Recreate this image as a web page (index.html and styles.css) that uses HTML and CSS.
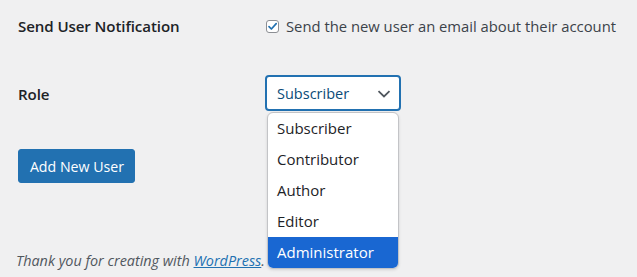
FILE: index.html
```html
<!DOCTYPE html>
<html lang="en">
<head>
<meta charset="utf-8">
<title>Add New User</title>
<link rel="stylesheet" href="styles.css">
</head>
<body>
<div class="page">
  <form class="form">
    <div class="row row-notify">
      <div class="label">Send User Notification</div>
      <label class="check">
        <span class="box"><svg width="11" height="11" viewBox="0 0 11 11"><path d="M2 5.6 L4.4 8 L9.2 2.6" fill="none" stroke="#2271b1" stroke-width="1.7" stroke-linecap="round" stroke-linejoin="round"/></svg></span>
        <span class="check-text">Send the new user an email about their account</span>
      </label>
    </div>
    <div class="row row-role">
      <div class="label label-role">Role</div>
      <div class="select-wrap">
        <div class="select">
          <span>Subscriber</span>
          <svg class="chev" width="14" height="8" viewBox="0 0 14 8"><path d="M1.5 1.2 L7 6.4 L12.5 1.2" fill="none" stroke="#50575e" stroke-width="1.8"/></svg>
        </div>
        <ul class="menu">
          <li class="opt">Subscriber</li>
          <li class="opt">Contributor</li>
          <li class="opt">Author</li>
          <li class="opt">Editor</li>
          <li class="opt opt-active">Administrator</li>
        </ul>
      </div>
    </div>
    <div class="actions">
      <button type="button" class="btn">Add New User</button>
    </div>
  </form>
  <p class="footer"><em>Thank you for creating with <a href="#">WordPress</a>.</em></p>
</div>
</body>
</html>
```
FILE: styles.css
```css
html, body {
  margin: 0;
  padding: 0;
  background: #f0f0f1;
}
body {
  font-family: "Open Sans", "Noto Sans", sans-serif;
  color: #1d2327;
  font-size: 14px;
}
.page {
  width: 637px;
  height: 277px;
  overflow: hidden;
  padding-left: 18px;
  box-sizing: border-box;
}
.form {
  margin: 0;
}
.row {
  display: grid;
  grid-template-columns: 247px auto;
  align-items: center;
}
.row-notify {
  padding-top: 15px;
  height: 22px;
}
.label {
  font-weight: 600;
  font-size: 15.1px;
  line-height: 22px;
  letter-spacing: -0.1px;
}
.label-role {
  position: relative;
  top: 1px;
}
.check {
  display: flex;
  align-items: center;
  gap: 7px;
  font-size: 14.8px;
  line-height: 22px;
  color: #3c434a;
}
.box {
  width: 11px;
  height: 11px;
  border: 1px solid #8c8f94;
  border-radius: 3px;
  background: #fff;
  display: flex;
  align-items: center;
  justify-content: center;
  margin-left: 1px;
  margin-top: 1px;
}
.row-role {
  margin-top: 38px;
  height: 36px;
}
.select-wrap {
  position: relative;
  width: 136px;
  height: 36px;
}
.select {
  box-sizing: border-box;
  width: 136px;
  height: 36px;
  border: 2px solid #2271b1;
  border-radius: 4px;
  background: #fff;
  color: #0a4b78;
  display: flex;
  align-items: center;
  justify-content: space-between;
  padding: 0 8px 0 10px;
  font-size: 14.5px;
}
.chev {
  margin-top: 1px;
}
.menu {
  position: absolute;
  left: 2px;
  top: 37px;
  width: 132px;
  margin: 0;
  padding: 0;
  list-style: none;
  background: #fff;
  border: 1px solid #c3c4c7;
  border-radius: 6px;
  box-sizing: border-box;
  overflow: hidden;
  box-shadow: 0 1px 3px rgba(0,0,0,0.12);
}
.opt {
  height: 31px;
  line-height: 31px;
  padding-left: 9px;
  font-size: 15px;
  color: #1d2327;
}
.opt-active {
  background: #1967d2;
  color: #fff;
}
.actions {
  margin-top: 38px;
}
.btn {
  display: block;
  box-sizing: border-box;
  width: 117px;
  height: 34px;
  border: 1px solid #2271b1;
  border-radius: 3px;
  background: #2271b1;
  color: #fff;
  font-family: "Open Sans", "Noto Sans", sans-serif;
  font-size: 14.2px;
  padding: 0 0 0 1px;
}
.footer {
  margin: 68px 0 0 -2px;
  line-height: 20px;
  font-size: 14.4px;
  color: #50575e;
}
.footer a {
  color: #2271b1;
}
```
